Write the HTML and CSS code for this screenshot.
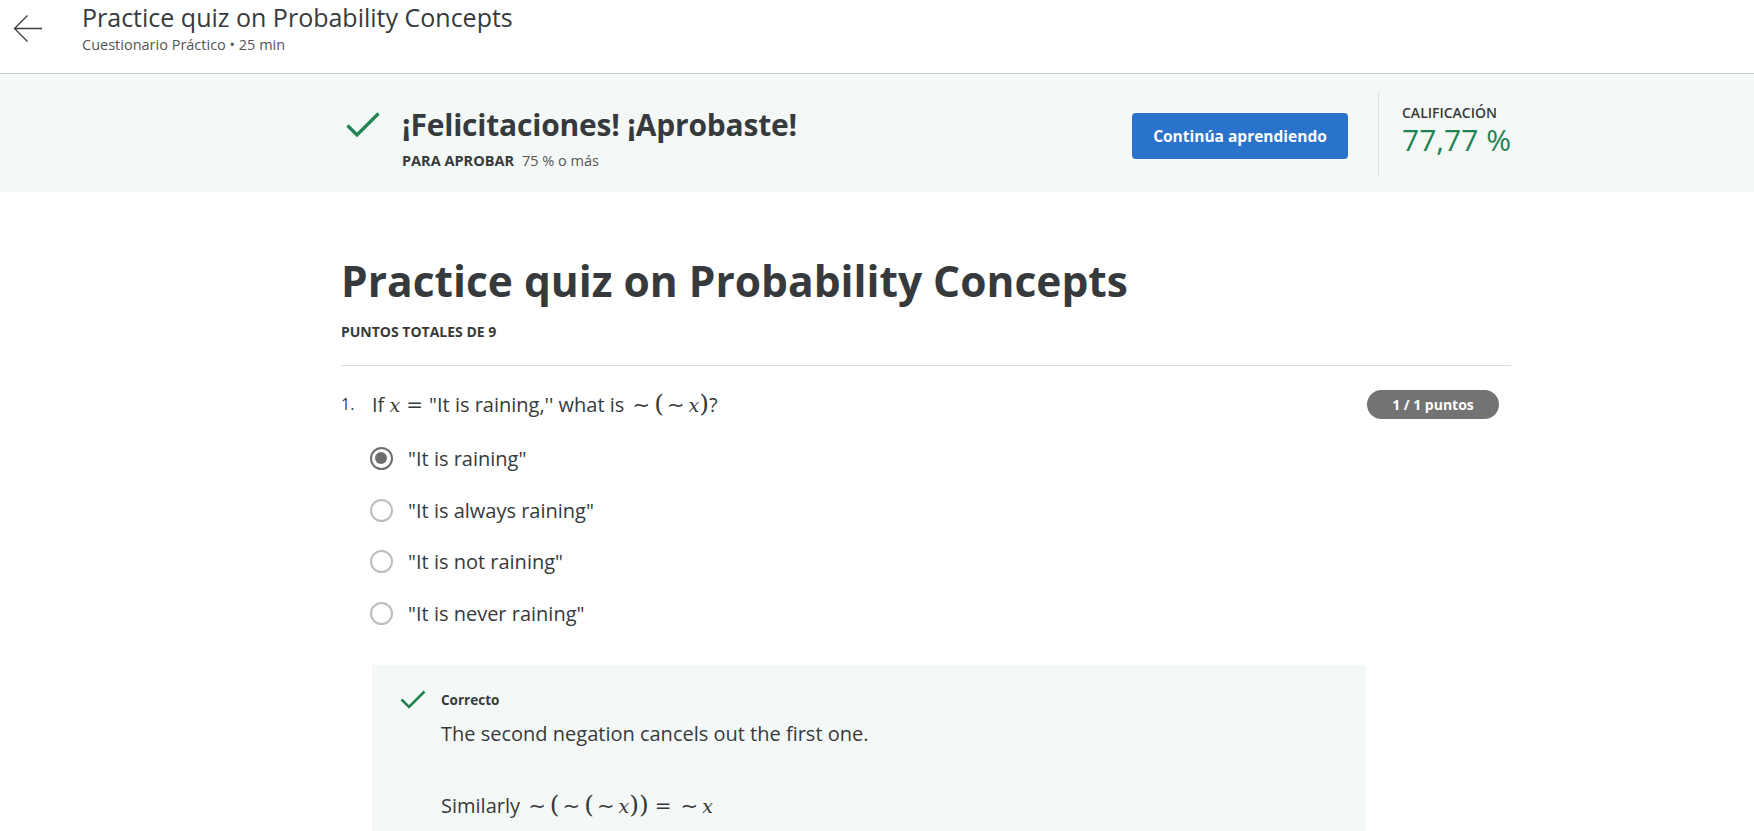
FILE: index.html
```html
<!DOCTYPE html>
<html lang="es">
<head>
<meta charset="utf-8">
<title>Practice quiz on Probability Concepts</title>
<link rel="stylesheet" href="styles.css">
</head>
<body>
<header class="topbar">
  <a class="back" href="#" aria-label="Volver">
    <svg width="30" height="30" viewBox="0 0 30 30" fill="none" stroke="#3c3c3c" stroke-width="1.3">
      <path d="M29 14.5H1.5M14.5 1.5L1.5 14.5L14.5 27.5"/>
    </svg>
  </a>
  <div class="top-titles">
    <div class="top-title">Practice quiz on Probability Concepts</div>
    <div class="top-sub">Cuestionario Práctico • 25 min</div>
  </div>
</header>

<section class="banner">
  <div class="banner-inner">
    <svg class="pass-check" width="34" height="26" viewBox="0 0 34 26" fill="none" stroke="#1f8354" stroke-width="3.2">
      <path d="M1.5 13.5L11 23L32.5 1.5"/>
    </svg>
    <div class="pass-text">
      <div class="pass-title">¡Felicitaciones! ¡Aprobaste!</div>
      <div class="pass-req"><span class="req-label">PARA APROBAR</span><span class="req-val">75 % o más</span></div>
    </div>
    <button class="btn-continue">Continúa aprendiendo</button>
    <div class="grade">
      <div class="grade-label">CALIFICACIÓN</div>
      <div class="grade-val">77,77 %</div>
    </div>
  </div>
</section>

<main class="content">
  <h1 class="quiz-title">Practice quiz on Probability Concepts</h1>
  <div class="total">PUNTOS TOTALES DE 9</div>
  <hr class="rule">

  <div class="question">
    <div class="q-head">
      <span class="q-num">1.</span>
      <span class="q-text">If <span class="mi">x</span><span class="mo eq">=</span>"It is raining,'' what is <span class="mo tl">∼</span><span class="paren">(</span><span class="mo tl">∼</span><span class="mi">x</span><span class="paren">)</span>?</span>
      <span class="badge">1 / 1 puntos</span>
    </div>
    <ul class="options">
      <li class="option"><span class="radio checked"></span><span>"It is raining"</span></li>
      <li class="option"><span class="radio"></span><span>"It is always raining"</span></li>
      <li class="option"><span class="radio"></span><span>"It is not raining"</span></li>
      <li class="option"><span class="radio"></span><span>"It is never raining"</span></li>
    </ul>
    <div class="feedback">
      <div class="fb-head">
        <svg class="fb-check" width="26" height="19" viewBox="0 0 26 19" fill="none" stroke="#1f8354" stroke-width="2.6">
          <path d="M1.5 9.5L9 17L24.5 1.5"/>
        </svg>
        <span class="fb-label">Correcto</span>
      </div>
      <p class="fb-text">The second negation cancels out the first one.</p>
      <p class="fb-text fb-math">Similarly <span class="mo tl">∼</span><span class="paren">(</span><span class="mo tl">∼</span><span class="paren">(</span><span class="mo tl">∼</span><span class="mi">x</span><span class="paren">))</span><span class="mo eq">=</span><span class="mo tl">∼</span><span class="mi">x</span></p>
    </div>
  </div>
</main>
</body>
</html>
```

FILE: styles.css
```css
* { box-sizing: border-box; }
html, body { margin: 0; padding: 0; }
body {
  font-family: "Open Sans", "Noto Sans", "Liberation Sans", sans-serif;
  color: #373a3c;
  background: #fff;
  overflow: hidden;
}

.topbar {
  height: 74px;
  border-bottom: 1px solid #c9c9c9;
  display: flex;
  align-items: flex-start;
}
.back {
  display: block;
  margin: 14px 0 0 13px;
  width: 30px;
  height: 30px;
}
.back svg { display: block; }
.top-titles { margin-left: 39px; padding-top: 1px; }
.top-title {
  font-size: 25px;
  line-height: 33px;
  color: #373a3c;
}
.top-sub {
  font-size: 14.5px;
  line-height: 20px;
  color: #555;
  margin-top: 1px;
}

.banner {
  background: #f4f9f7;
  height: 118px;
}
.banner-inner {
  display: flex;
  align-items: flex-start;
  padding-left: 346px;
}
.pass-check { margin-top: 38px; flex: none; }
.pass-text { margin-left: 22px; padding-top: 30px; width: 730px; }
.pass-title {
  font-size: 30px;
  line-height: 42px;
  font-weight: 700;
  color: #373a3c;
  letter-spacing: -0.2px;
}
.pass-req { margin-top: 5px; font-size: 14.5px; line-height: 19px; }
.req-label { font-weight: 700; margin-right: 8px; }
.req-val { color: #555; }

.btn-continue {
  margin-top: 39px;
  width: 216px;
  height: 46px;
  border: none;
  border-radius: 4px;
  background: #2a73cc;
  color: #fff;
  font-family: inherit;
  font-size: 15.5px;
  font-weight: 700;
  flex: none;
}
.grade {
  margin-left: 30px;
  margin-top: 18px;
  height: 85px;
  border-left: 1px solid #dfe3e2;
  padding-left: 23px;
  padding-top: 12px;
}
.grade-label {
  font-size: 14px;
  line-height: 18px;
  font-weight: 600;
  color: #373a3c;
}
.grade-val {
  font-size: 30px;
  line-height: 36px;
  color: #1f8354;
  font-weight: 400;
}

.content {
  margin-left: 341px;
  width: 1170px;
  padding-top: 60px;
}
.quiz-title {
  margin: 0;
  font-size: 42.5px;
  line-height: 58px;
  font-weight: 700;
  color: #373a3c;
}
.total {
  margin-top: 13px;
  font-size: 14px;
  font-weight: 700;
  line-height: 18px;
}
.rule {
  margin: 24px 0 0 0;
  border: 0;
  border-top: 1px solid #dcdcdc;
}

.question { padding-top: 23px; }
.q-head {
  display: flex;
  align-items: center;
  height: 30px;
  padding-right: 12px;
}
.q-num { width: 31px; font-size: 16px; }
.q-text { flex: 1; font-size: 20px; color: #373a3c; }
.badge {
  background: #737373;
  color: #fff;
  font-weight: 700;
  font-size: 14px;
  height: 29px;
  line-height: 29px;
  width: 132px;
  text-align: center;
  border-radius: 15px;
}
.mi {
  font-family: "DejaVu Serif", "Liberation Serif", serif;
  font-style: italic;
  font-size: 19px;
}
.mo {
  font-family: "DejaVu Sans", "Liberation Serif", serif;
  font-size: 20px;
}
.mo.eq { margin: 0 6px; font-family: "DejaVu Serif", serif; }
.mo.tl { font-size: 21px; margin: 0 4px 0 3px; line-height: 1; }
.paren {
  font-family: "DejaVu Serif", "Liberation Serif", serif;
  font-size: 25px;
  font-weight: 300;
  line-height: 1;
}

.options {
  list-style: none;
  margin: 14px 0 0 0;
  padding: 0 0 0 29px;
}
.option {
  display: flex;
  align-items: center;
  height: 51.5px;
  font-size: 20px;
  color: #373a3c;
}
.radio {
  width: 23px;
  height: 23px;
  border: 2px solid #bdbdbd;
  border-radius: 50%;
  margin-right: 15px;
  flex: none;
  position: relative;
}
.radio.checked { border: 2.5px solid #6e6e6e; }
.radio.checked::after {
  content: "";
  position: absolute;
  left: 3px; top: 3px;
  width: 12px; height: 12px;
  border-radius: 50%;
  background: #6e6e6e;
}

.feedback {
  margin: 26px 0 0 31px;
  width: 994px;
  background: #f4f9f7;
  padding: 25px 28px 30px 28px;
}
.fb-head { display: flex; align-items: center; }
.fb-check { flex: none; }
.fb-label {
  margin-left: 15px;
  font-size: 13.5px;
  font-weight: 700;
}
.fb-text {
  margin: 11px 0 0 41px;
  font-size: 20px;
  line-height: 28px;
}
.fb-math { margin-top: 44px; }
```
